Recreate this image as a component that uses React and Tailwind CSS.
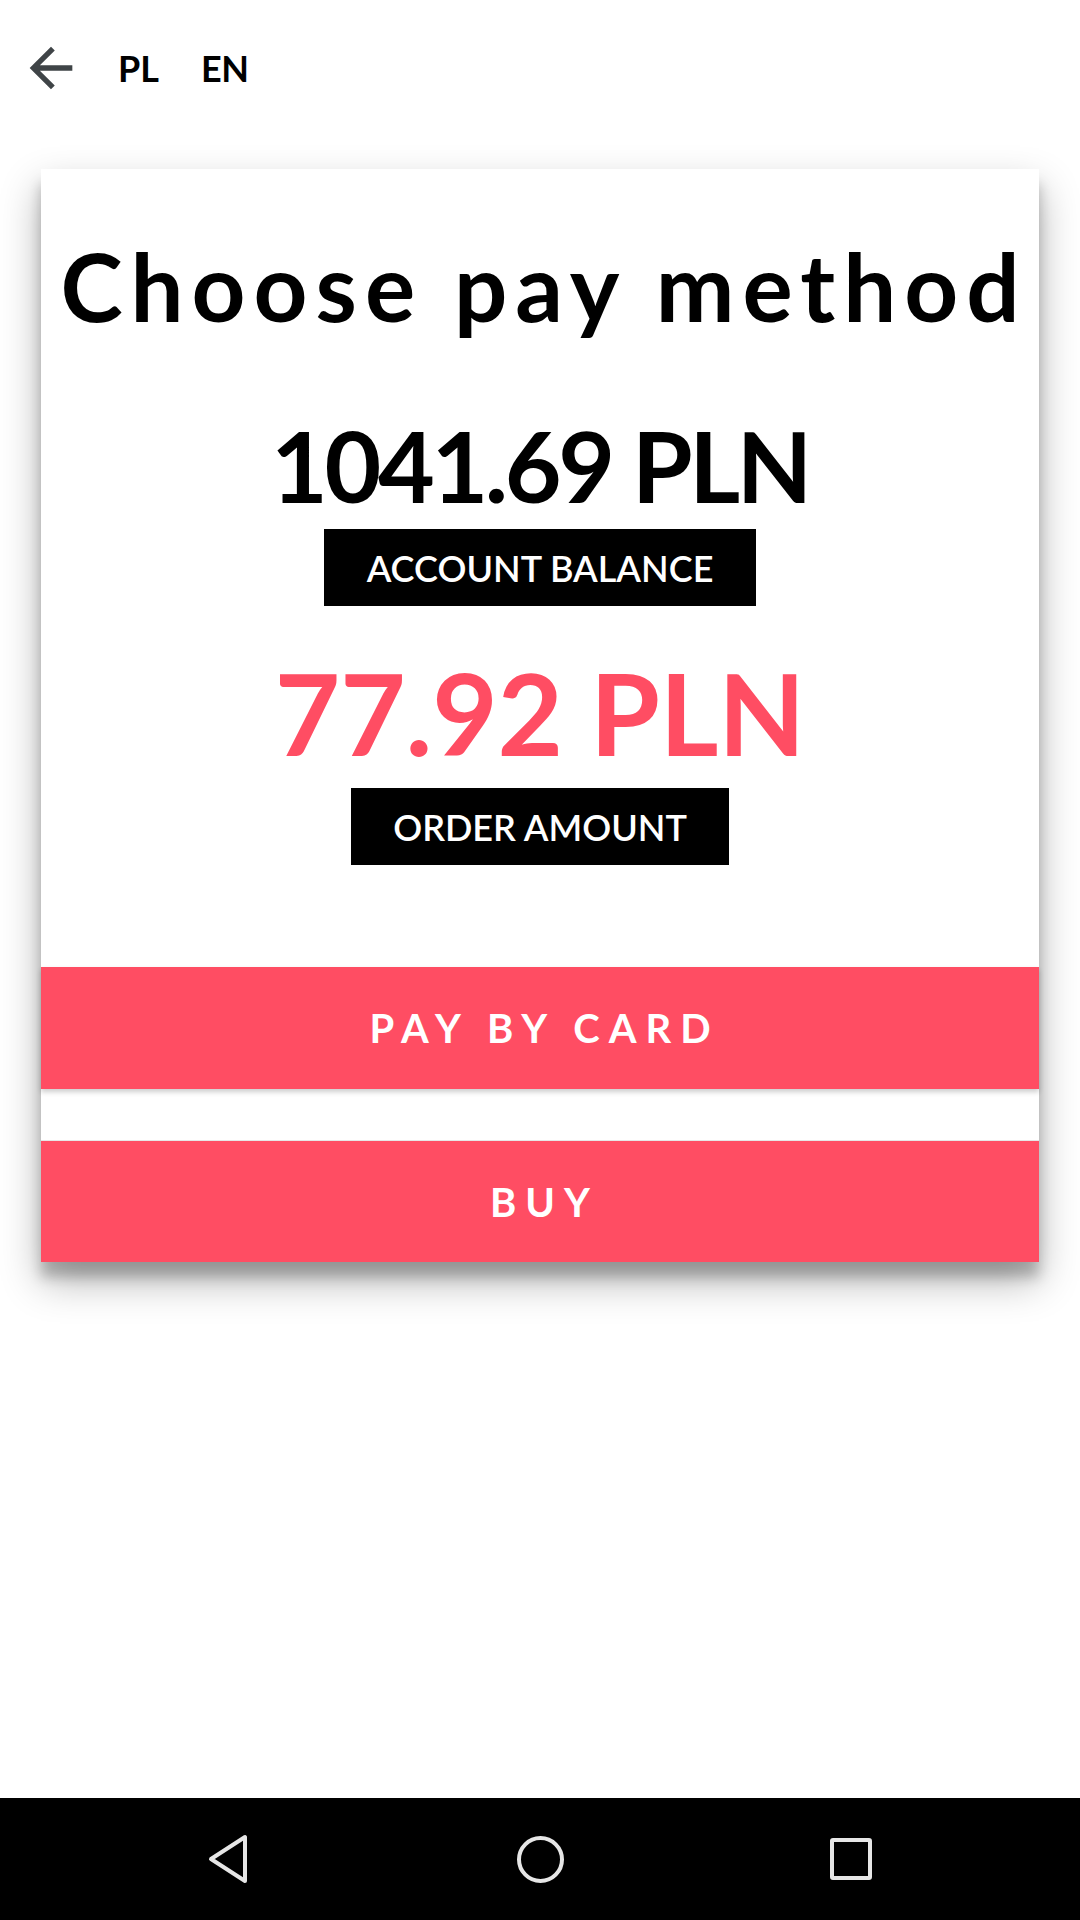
import React from "react";

export default function App() {
  return (
    <div className="w-[1080px] h-[1920px] flex flex-col bg-white overflow-hidden font-['Lato',sans-serif]">
      {/* top bar */}
      <div className="h-[136px] flex items-center pl-[19px] shrink-0">
        <svg width="64" height="64" viewBox="0 0 24 24" className="shrink-0">
          <path
            d="M20 11H7.83l5.59-5.59L12 4l-8 8 8 8 1.41-1.41L7.83 13H20v-2z"
            fill="#3f4447"
          />
        </svg>
        <span className="ml-[35px] text-[36px] font-bold text-black leading-none">PL</span>
        <span className="ml-[42px] text-[36px] font-bold text-black leading-none tracking-[-0.5px]">EN</span>
      </div>

      {/* main */}
      <div className="flex-1 pt-[33px]">
        <div className="mx-[41px] w-[998px] bg-white flex flex-col items-center shadow-[0_19px_38px_rgba(0,0,0,0.30),0_15px_12px_rgba(0,0,0,0.22)]">
          <div className="mt-[70px] pl-[8px] text-[94px] leading-none font-bold text-black tracking-[8px] whitespace-nowrap">
            Choose pay method
          </div>
          <div className="mt-[83px] text-[98px] leading-none font-bold text-black tracking-[-3.4px]">
            1041.69 PLN
          </div>
          <div className="mt-[15px] h-[77px] px-[43px] bg-black text-white flex items-center justify-center text-[36px] font-semibold leading-none">
            ACCOUNT BALANCE
          </div>
          <div className="mt-[50px] text-[113px] leading-none font-bold text-[#ff4d63] tracking-[-0.2px]">
            77.92 PLN
          </div>
          <div className="mt-[19px] h-[77px] px-[42px] bg-black text-white flex items-center justify-center text-[36px] font-semibold leading-none">
            ORDER AMOUNT
          </div>
          <button className="mt-[102px] w-full h-[122px] pl-[9px] bg-[#ff4d63] text-white text-[40px] font-bold tracking-[9px] leading-none flex items-center justify-center shadow-[0_3px_5px_rgba(0,0,0,0.2)] relative">
            PAY BY CARD
          </button>
          <div className="h-[51px] w-full bg-white"></div>
          <button className="w-full h-[122px] pl-[9px] bg-[#ff4d63] text-white text-[40px] font-bold tracking-[9px] leading-none flex items-center justify-center border-t border-[#e6e6e6]">
            BUY
          </button>
        </div>
      </div>

      {/* android nav bar */}
      <div className="h-[122px] bg-black flex items-center justify-center shrink-0">
        <div className="w-[311px] flex justify-center">
          <svg width="44" height="52" viewBox="0 0 44 52">
            <path
              d="M38 4 L38 48 L4 26 Z"
              fill="none"
              stroke="#e6e6e6"
              strokeWidth="4"
              strokeLinejoin="round"
            />
          </svg>
        </div>
        <div className="w-[311px] flex justify-center">
          <div className="w-[47px] h-[47px] rounded-full border-[4px] border-[#e6e6e6]"></div>
        </div>
        <div className="w-[311px] flex justify-center">
          <div className="w-[42px] h-[42px] rounded-[3px] border-[4px] border-[#e6e6e6]"></div>
        </div>
      </div>
    </div>
  );
}
